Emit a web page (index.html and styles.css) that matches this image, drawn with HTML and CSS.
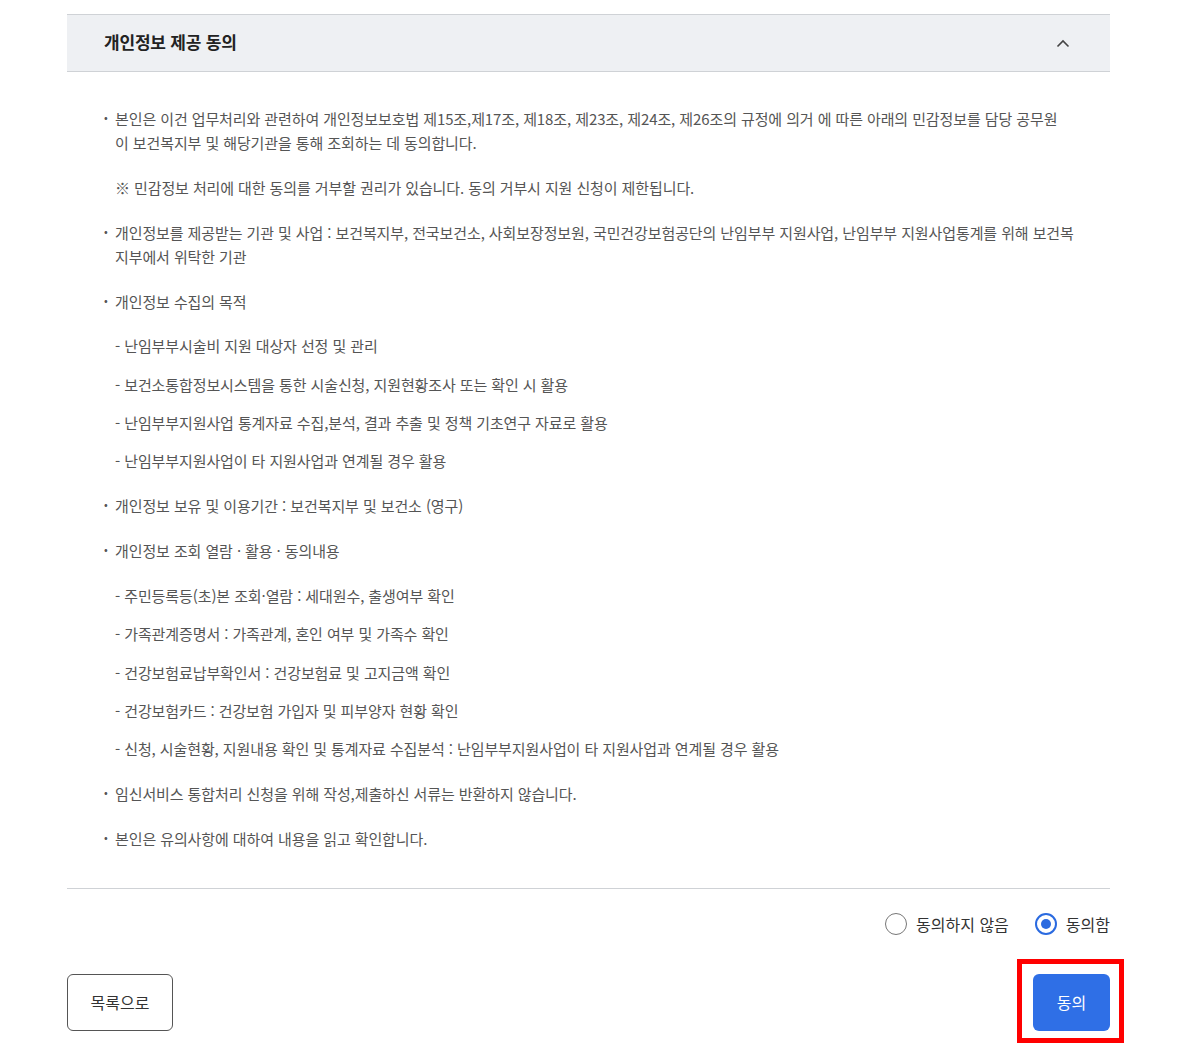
FILE: index.html
```html
<!DOCTYPE html>
<html lang="ko">
<head>
<meta charset="utf-8">
<title>개인정보 제공 동의</title>
<link rel="stylesheet" href="styles.css">
</head>
<body>
<div class="page">
  <section class="panel">
    <div class="panel-head">
      <h2 class="panel-title">개인정보 제공 동의</h2>
      <svg class="chev" width="14" height="9" viewBox="0 0 14 9"><path d="M1.5 7.5 L7 2 L12.5 7.5" fill="none" stroke="#444" stroke-width="1.6"/></svg>
    </div>
    <div class="panel-body">
      <p class="item bullet">본인은 이건 업무처리와 관련하여 개인정보보호법 제15조,제17조, 제18조, 제23조, 제24조, 제26조의 규정에 의거 에 따른 아래의 민감정보를 담당 공무원 이 보건복지부 및 해당기관을 통해 조회하는 데 동의합니다.</p>
      <p class="item">※ 민감정보 처리에 대한 동의를 거부할 권리가 있습니다. 동의 거부시 지원 신청이 제한됩니다.</p>
      <p class="item bullet">개인정보를 제공받는 기관 및 사업 : 보건복지부, 전국보건소, 사회보장정보원, 국민건강보험공단의 난임부부 지원사업, 난임부부 지원사업통계를 위해 보건복지부에서 위탁한 기관</p>
      <p class="item bullet">개인정보 수집의 목적</p>
      <p class="item sub first">- 난임부부시술비 지원 대상자 선정 및 관리</p>
      <p class="item sub">- 보건소통합정보시스템을 통한 시술신청, 지원현황조사 또는 확인 시 활용</p>
      <p class="item sub">- 난임부부지원사업 통계자료 수집,분석, 결과 추출 및 정책 기초연구 자료로 활용</p>
      <p class="item sub">- 난임부부지원사업이 타 지원사업과 연계될 경우 활용</p>
      <p class="item bullet">개인정보 보유 및 이용기간 : 보건복지부 및 보건소 (영구)</p>
      <p class="item bullet">개인정보 조회 열람 · 활용 · 동의내용</p>
      <p class="item sub first">- 주민등록등(초)본 조회·열람 : 세대원수, 출생여부 확인</p>
      <p class="item sub">- 가족관계증명서 : 가족관계, 혼인 여부 및 가족수 확인</p>
      <p class="item sub">- 건강보험료납부확인서 : 건강보험료 및 고지금액 확인</p>
      <p class="item sub">- 건강보험카드 : 건강보험 가입자 및 피부양자 현황 확인</p>
      <p class="item sub">- 신청, 시술현황, 지원내용 확인 및 통계자료 수집분석 : 난임부부지원사업이 타 지원사업과 연계될 경우 활용</p>
      <p class="item bullet">임신서비스 통합처리 신청을 위해 작성,제출하신 서류는 반환하지 않습니다.</p>
      <p class="item bullet">본인은 유의사항에 대하여 내용을 읽고 확인합니다.</p>
    </div>
  </section>

  <div class="agree-row">
    <label class="radio"><span class="dot"></span>동의하지 않음</label>
    <label class="radio on"><span class="dot"></span>동의함</label>
  </div>

  <div class="btn-row">
    <button class="btn btn-line">목록으로</button>
    <div class="highlight"><button class="btn btn-primary">동의</button></div>
  </div>
</div>
</body>
</html>
```

FILE: styles.css
```css
* { box-sizing: border-box; }
html, body { margin: 0; padding: 0; background: #fff; }
body {
  font-family: "Noto Sans CJK KR", "Noto Sans", sans-serif;
  color: #555;
}
.page {
  width: 1043px;
  margin-left: 67px;
  padding-top: 14px;
}
.panel-head {
  height: 58px;
  background: #eef0f3;
  border-top: 1px solid #cfd2d6;
  border-bottom: 1px solid #cfd2d6;
  display: flex;
  align-items: center;
  justify-content: space-between;
  padding: 0 40px 0 37px;
}
.panel-title {
  margin: -3px 0 0;
  font-size: 17px;
  font-weight: 700;
  color: #222;
  letter-spacing: -0.2px;
}
.chev { display: block; }
.panel-body {
  padding: 14px 36px 37px 48px;
  border-bottom: 1px solid #cfd2d6;
}
.item {
  margin: 20.9px 0 0;
  font-size: 15px;
  line-height: 24px;
  letter-spacing: -0.1px;
}
.item.bullet { position: relative; }
.item.bullet::before {
  content: "•";
  position: absolute;
  left: -11px;
  top: -2px;
  font-size: 11px;
}
.item.sub { margin-top: 14.3px; }
.item.sub.first { margin-top: 20.9px; }
.agree-row {
  display: flex;
  justify-content: flex-end;
  gap: 26px;
  padding-top: 23px;
  height: 85px;
}
.radio {
  display: flex;
  align-items: center;
  gap: 9px;
  font-size: 16px;
  color: #333;
  height: 24px;
}
.dot {
  width: 22px;
  height: 22px;
  border-radius: 50%;
  border: 1.5px solid #777;
  background: #fff;
  position: relative;
}
.radio.on .dot { border: 2px solid #2a6ae0; }
.radio.on .dot::after {
  content: "";
  position: absolute;
  left: 50%; top: 50%;
  width: 10px; height: 10px;
  margin: -5px 0 0 -5px;
  border-radius: 50%;
  background: #2a6ae0;
}
.btn-row {
  display: flex;
  justify-content: space-between;
  align-items: flex-start;
}
.btn {
  font-family: inherit;
  height: 57px;
  border-radius: 6px;
  font-size: 16px;
  cursor: pointer;
}
.btn-line {
  width: 106px;
  background: #fff;
  border: 1px solid #555;
  color: #333;
}
.highlight {
  border: 5px solid #f00;
  padding: 10px 9px 7px 11px;
  margin: -15px -14px 0 0;
}
.btn-primary {
  display: block;
  width: 77px;
  background: #2f6fe6;
  border: 0;
  color: #fff;
}
```
